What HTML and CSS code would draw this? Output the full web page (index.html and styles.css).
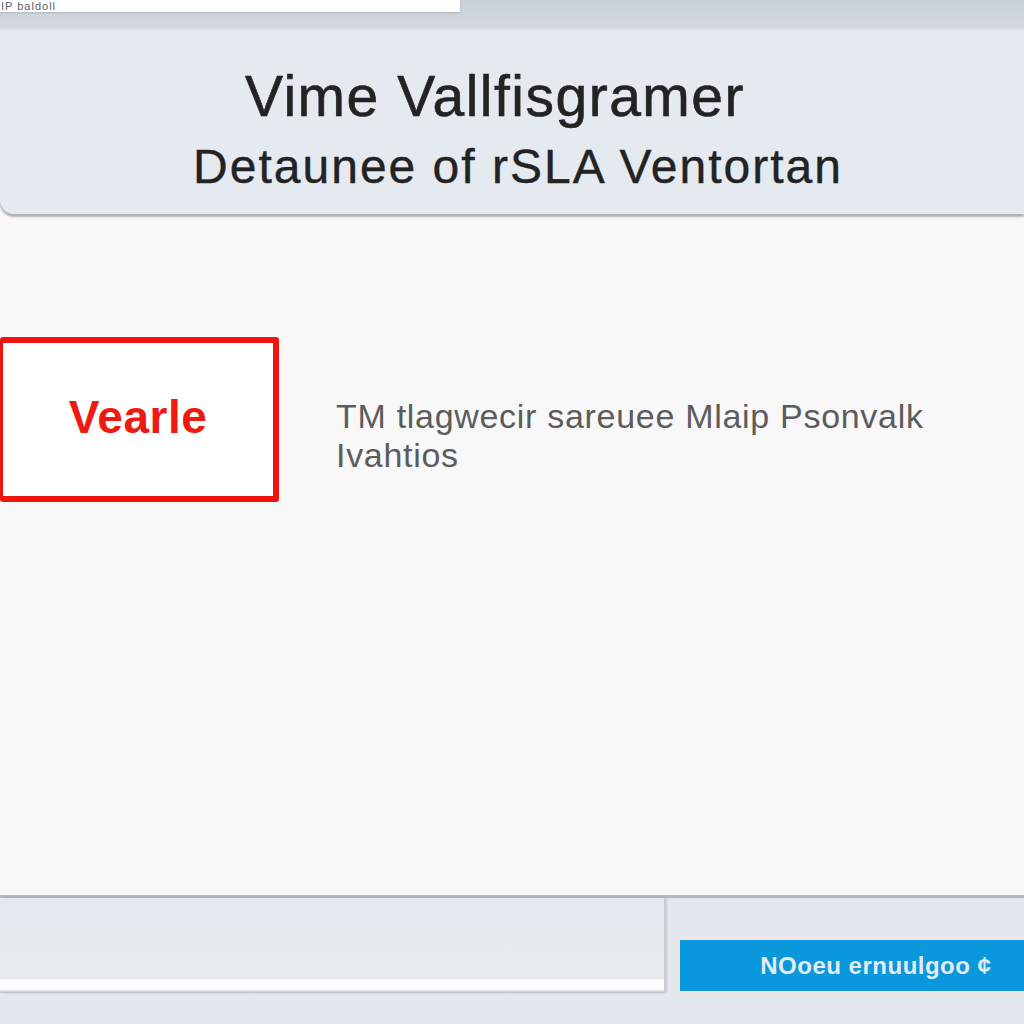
FILE: index.html
```html
<!DOCTYPE html>
<html lang="en">

<head>
    <meta charset="UTF-8">
    <meta name="viewport" content="width=device-width, initial-scale=1.0">
    <title>Vime Vallfisgramer</title>
    <link rel="stylesheet" href="styles.css">
</head>

<body>
    <div class="top-bar">
        <div class="tab"><span class="tab-text">IP baldoll</span></div>
    </div>

    <div class="header">
        <h1 class="title">Vime Vallfisgramer</h1>
        <p class="subtitle">Detaunee of rSLA Ventortan</p>
    </div>

    <div class="main">
        <div class="row">
            <div class="brand-box">
                <span class="brand">Vearle</span>
            </div>
            <p class="desc">TM tlagwecir sareuee Mlaip Psonvalk<br>Ivahtios</p>
        </div>
    </div>

    <div class="footer">
        <div class="field"></div>
        <button class="action">NOoeu ernuulgoo ¢</button>
    </div>
</body>

</html>
```
FILE: styles.css
```css
* {
    margin: 0;
    padding: 0;
    box-sizing: border-box;
}

body {
    background-color: #f8f8f8;
    width: 100%;
    height: 100vh;
    font-family: "Liberation Sans", Arial, sans-serif;
    overflow: hidden;
}

.top-bar {
    height: 28px;
    background: linear-gradient(#c9d0d7, #d3d9df);
}

.tab {
    width: 460px;
    height: 12px;
    background-color: white;
    overflow: hidden;
    box-shadow: 0 1px 2px rgba(0, 0, 0, .15);
}

.tab-text {
    display: block;
    font-size: 11px;
    color: #5a5f66;
    line-height: 12px;
    letter-spacing: 1px;
    padding-left: 1px;
}

.header {
    height: 186px;
    background-color: #e4eaf0;
    border-top: 2px solid #dbe1e7;
    border-bottom-left-radius: 14px;
    box-shadow: 0 3px 2px rgba(0, 0, 0, .28);
    text-align: center;
    padding-top: 36px;
}

.title {
    font-size: 57px;
    font-weight: normal;
    color: #232323;
    line-height: 60px;
    letter-spacing: 1.5px;
    transform: translateX(-17px);
    -webkit-text-stroke: 0.6px #232323;
}

.subtitle {
    font-size: 48px;
    color: #232323;
    line-height: 50px;
    margin-top: 16px;
    letter-spacing: 2px;
    transform: translateX(6px);
    -webkit-text-stroke: 0.4px #232323;
}

.main {
    height: 681px;
    padding-top: 123px;
}

.row {
    display: flex;
    align-items: flex-start;
    gap: 57px;
}

.brand-box {
    width: 279px;
    height: 165px;
    border: 6px solid #f0140e;
    border-left: 3px solid #f0140e;
    border-radius: 3px;
    display: flex;
    align-items: center;
    justify-content: center;
    background-color: white;
}

.brand {
    color: #ee1a12;
    font-weight: bold;
    font-size: 46px;
    letter-spacing: 0.5px;
    margin-top: -6px;
}

.desc {
    color: #5c5c5c;
    font-size: 34px;
    line-height: 39px;
    letter-spacing: 0.7px;
    margin-top: 60px;
}

.footer {
    height: 129px;
    border-top: 3px solid #b4b9be;
    background-color: #e3e8ee;
    display: flex;
    align-items: flex-start;
    gap: 14px;
}

.field {
    width: 665px;
    height: 95px;
    background: linear-gradient(#e4e9ef 0, #e6ebf0 85%, #fbfcfd 86%, #fbfcfd 96%, #b9bec4 100%);
    box-shadow: 3px 0 2px rgba(0, 0, 0, .12);
}

.action {
    margin-top: 40px;
    width: 346px;
    height: 55px;
    background-color: #0a98dc;
    border: 2px solid #f3e4e0;
    border-right: 0;
    color: #e4ebf2;
    font-family: "Liberation Sans", Arial, sans-serif;
    font-size: 24px;
    font-weight: bold;
    letter-spacing: 0.5px;
    text-align: left;
    padding-left: 80px;
}
```
